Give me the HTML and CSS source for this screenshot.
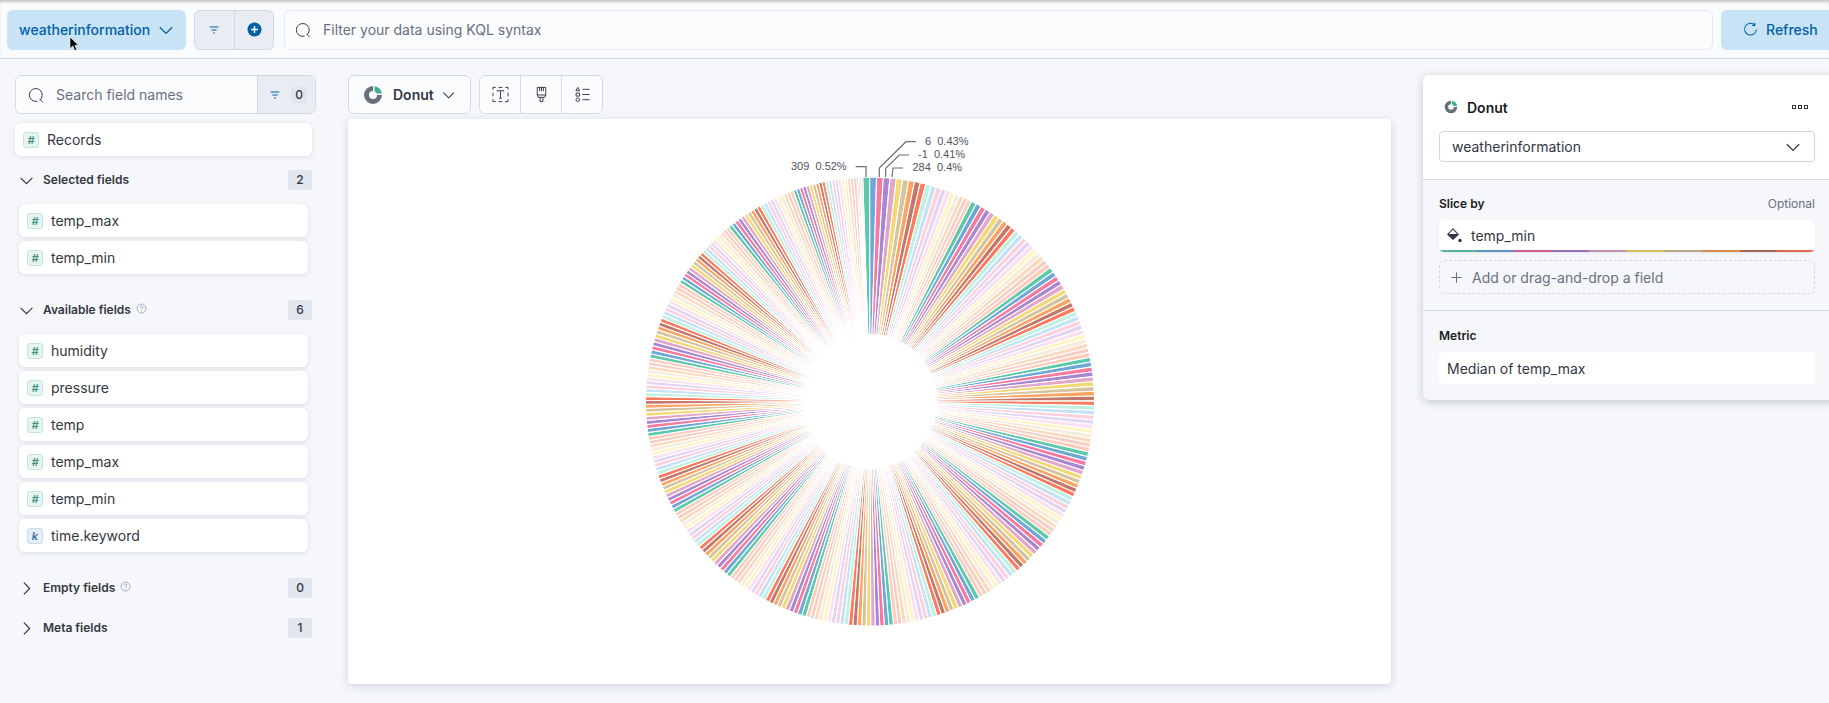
FILE: index.html
```html
<!DOCTYPE html>
<html lang="en">
<head>
    <meta charset="UTF-8">
    <meta name="viewport" content="width=device-width, initial-scale=1.0">
    <title>Lens - weatherinformation</title>
    <link rel="stylesheet" href="styles.css">
</head>
<body>

<div class="topbar">
    <button class="dataview-btn">
        <span>weatherinformation</span>
        <svg class="chevron" viewBox="0 0 16 16"><path d="M2.5 5.5 8 11l5.5-5.5"/></svg>
    </button>
    <div class="filter-group">
        <div class="filter-cell">
            <svg class="filter-icon" viewBox="0 0 16 16"><path d="M3 4.5h10M5 8h6M7 11.5h2"/></svg>
        </div>
        <div class="filter-cell">
            <svg class="plus-icon" viewBox="0 0 16 16"><circle cx="8" cy="8" r="7.5"/><path d="M8 4.2v7.6M4.2 8h7.6"/></svg>
        </div>
    </div>
    <div class="query-input">
        <svg class="search-icon" viewBox="0 0 16 16"><path d="M12.2 12.6a6.4 6.4 0 1 0-2.6 1.5M11.6 11.8l3 3.4"/></svg>
        <span>Filter your data using KQL syntax</span>
    </div>
    <button class="refresh-btn">
        <svg class="refresh-icon" viewBox="0 0 16 16"><path d="M12.5 3.2A6.3 6.3 0 1 0 14.3 8M12.6 .8v3h-3"/></svg>
        <span>Refresh</span>
    </button>
</div>

<div class="main">
    <div class="sidebar">
        <div class="field-search">
            <div class="field-search-input">
                <svg class="search-icon" viewBox="0 0 16 16"><path d="M12.2 12.6a6.4 6.4 0 1 0-2.6 1.5M11.6 11.8l3 3.4"/></svg>
                <span>Search field names</span>
            </div>
            <div class="field-search-filter">
                <svg class="filter-icon" viewBox="0 0 16 16"><path d="M3 4.5h10M5 8h6M7 11.5h2"/></svg>
                <span class="search-count">0</span>
            </div>
        </div>

        <div class="field-item records"><span class="type-icon">#</span>Records</div>

        <div class="section-head">
            <svg class="section-chevron" viewBox="0 0 16 16"><path d="M2.5 5.5 8 11l5.5-5.5"/></svg>
            <span class="section-title">Selected fields</span>
            <span class="count">2</span>
        </div>
        <div class="field-list">
            <div class="field-item"><span class="type-icon">#</span>temp_max</div>
            <div class="field-item"><span class="type-icon">#</span>temp_min</div>
        </div>

        <div class="section-head gap-top">
            <svg class="section-chevron" viewBox="0 0 16 16"><path d="M2.5 5.5 8 11l5.5-5.5"/></svg>
            <span class="section-title">Available fields</span>
            <svg class="help-icon" viewBox="0 0 16 16"><circle cx="8" cy="8" r="6.5"/><path d="M6 6.4a2 2 0 1 1 3 1.7c-.7.4-1 .8-1 1.6M8 11.2v.9"/></svg>
            <span class="count">6</span>
        </div>
        <div class="field-list">
            <div class="field-item"><span class="type-icon">#</span>humidity</div>
            <div class="field-item"><span class="type-icon">#</span>pressure</div>
            <div class="field-item"><span class="type-icon">#</span>temp</div>
            <div class="field-item"><span class="type-icon">#</span>temp_max</div>
            <div class="field-item"><span class="type-icon">#</span>temp_min</div>
            <div class="field-item"><span class="type-icon keyword">k</span>time.keyword</div>
        </div>

        <div class="section-head gap-top">
            <svg class="section-chevron" viewBox="0 0 16 16"><path d="M5.5 2.5 11 8l-5.5 5.5"/></svg>
            <span class="section-title">Empty fields</span>
            <svg class="help-icon" viewBox="0 0 16 16"><circle cx="8" cy="8" r="6.5"/><path d="M6 6.4a2 2 0 1 1 3 1.7c-.7.4-1 .8-1 1.6M8 11.2v.9"/></svg>
            <span class="count">0</span>
        </div>
        <div class="section-head next">
            <svg class="section-chevron" viewBox="0 0 16 16"><path d="M5.5 2.5 11 8l-5.5 5.5"/></svg>
            <span class="section-title">Meta fields</span>
            <span class="count">1</span>
        </div>
    </div>

    <div class="workspace">
        <div class="toolbar">
            <button class="chart-type">
                <svg class="donut-icon" viewBox="0 0 20 20"><path class="donut-rest" d="M10 1a9 9 0 1 0 9 9h-5a4 4 0 1 1-4-4z"/><path class="donut-part" d="M11.5 1.2a9 9 0 0 1 7.3 7.3h-5a4 4 0 0 0-2.3-2.3z"/></svg>
                <span>Donut</span>
                <svg class="chevron dark" viewBox="0 0 16 16"><path d="M2.5 5.5 8 11l5.5-5.5"/></svg>
            </button>
            <div class="tool-group">
                <div class="tool">
                    <svg viewBox="0 0 18 18"><path d="M1 4V1.5h3M7 1.5h4M14 1.5h3V4M17 7v4M17 14v2.5h-3M11 16.5H7M4 16.5H1V14M1 11V7"/><path d="M5.5 6V5h7v1M9 5v8M7.5 13h3"/></svg>
                </div>
                <div class="tool">
                    <svg viewBox="0 0 18 18"><path d="M4.5 1.5h9v8h-9zM7 1.5v4M9 1.5v4M11 1.5v4M4.5 9.5l1 2.5h7l1-2.5M7.5 12v4.5h3V12"/></svg>
                </div>
                <div class="tool">
                    <svg viewBox="0 0 18 18"><path d="M4 1.5 6 5H2zM2.2 7.5h3.6v3.2H2.2z"/><circle cx="4" cy="14.5" r="1.9"/><path d="M9 3.5h7.5M9 9h7.5M9 14.5h7.5"/></svg>
                </div>
            </div>
        </div>
        <div class="chart-panel">
            <svg class="chart" viewBox="0 0 1043 565">
                <g id="slices"></g>
                <polyline class="leader" points="507.7,47.7 518,47.7 518,58"/>
                <polyline class="leader" points="568,22.7 558,22.7 531.3,49 531.3,58"/>
                <polyline class="leader" points="561,36 551.3,36 537.7,49.3 537.7,58"/>
                <polyline class="leader" points="555,49 545,49 544,58"/>
                <text class="label" x="443" y="50.8">309  0.52%</text>
                <text class="label" x="577" y="25.5">6  0.43%</text>
                <text class="label" x="570" y="39">-1  0.41%</text>
                <text class="label" x="564.5" y="51.5">284  0.4%</text>
            </svg>
        </div>
    </div>

    <div class="config">
        <div class="config-top">
            <div class="config-title">
                <svg class="donut-icon small" viewBox="0 0 20 20"><path class="donut-rest" d="M10 1a9 9 0 1 0 9 9h-5a4 4 0 1 1-4-4z"/><path class="donut-part" d="M11.5 1.2a9 9 0 0 1 7.3 7.3h-5a4 4 0 0 0-2.3-2.3z"/></svg>
                <span class="config-name">Donut</span>
                <span class="dots"><i></i><i></i><i></i></span>
            </div>
            <div class="config-select">
                <span>weatherinformation</span>
                <svg class="chevron dark" viewBox="0 0 16 16"><path d="M2.5 5.5 8 11l5.5-5.5"/></svg>
            </div>
        </div>
        <div class="config-block">
            <div class="config-label"><b>Slice by</b><span>Optional</span></div>
            <div class="dimension">
                <svg class="bucket-icon" viewBox="0 0 16 16"><path d="M7 1 1 7.5 7 13l6-5.5z"/><path class="bucket-empty" d="M7 2.6 2.9 7h8.2z"/><path d="M5 1.5 7 3.5"/><circle cx="14" cy="13.5" r="1.7"/></svg>
                <span>temp_min</span>
                <div class="palette">
                    <i class="c1"></i><i class="c2"></i><i class="c3"></i><i class="c4"></i><i class="c5"></i>
                    <i class="c6"></i><i class="c7"></i><i class="c8"></i><i class="c9"></i><i class="c10"></i>
                </div>
            </div>
            <div class="add-field">
                <svg class="add-icon" viewBox="0 0 16 16"><path d="M8 2.5v11M2.5 8h11"/></svg>
                <span>Add or drag-and-drop a field</span>
            </div>
        </div>
        <div class="config-block metric">
            <div class="config-label"><b>Metric</b></div>
            <div class="metric-box">Median of temp_max</div>
        </div>
    </div>
</div>

<svg class="cursor" viewBox="0 0 10 16"><path d="M1 1v11.5l2.8-2.6 2 4.6 2-.9-2-4.4H9.4z"/></svg>

<script src="app.js"></script>
</body>
</html>
```

FILE: styles.css
```css
* {
    box-sizing: border-box;
}
body {
    margin: 0;
    height: 703px;
    overflow: hidden;
    font-family: Inter, "Noto Sans", sans-serif;
    font-size: 14px;
    color: #343741;
    background-color: #f5f7fb;
}
button {
    font-family: inherit;
    border: none;
    cursor: pointer;
}
svg path, svg polyline {
    fill: none;
}

/* top bar */
.topbar {
    display: flex;
    align-items: center;
    gap: 8px;
    height: 59px;
    padding: 1px 0 0 7px;
    background-color: #fafbfd;
    border-bottom: 1px solid #d3dae6;
    box-shadow: inset 0 3px 3px -1px rgba(0,0,0,0.22);
}
.dataview-btn {
    display: flex;
    align-items: center;
    justify-content: space-between;
    flex: none;
    width: 179px;
    height: 40px;
    padding: 0 11px 0 12px;
    font-size: 14px;
    font-weight: 500;
    color: #0061a6;
    background-color: #c8e3f5;
    border-radius: 6px;
}
.chevron {
    width: 18px;
    height: 18px;
}
.chevron path {
    stroke: #0061a6;
    stroke-width: 1.1;
}
.chevron.dark path {
    stroke: #343741;
}
.filter-group {
    display: flex;
    flex: none;
    width: 80px;
    height: 40px;
    background-color: #e9edf3;
    border: 1px solid #d3dae6;
    border-radius: 6px;
}
.filter-cell {
    display: flex;
    align-items: center;
    justify-content: center;
    flex: 1;
}
.filter-cell + .filter-cell {
    border-left: 1px solid #d3dae6;
}
.filter-icon {
    width: 14px;
    height: 14px;
}
.filter-icon path {
    stroke: #0061a6;
    stroke-width: 1.2;
}
.plus-icon {
    width: 15px;
    height: 15px;
    margin-left: 1px;
}
.plus-icon circle {
    fill: #0061a6;
}
.plus-icon path {
    stroke: #fff;
    stroke-width: 1.6;
}
.query-input {
    display: flex;
    align-items: center;
    flex: 1;
    height: 40px;
    margin-left: 2px;
    padding-left: 10px;
    color: #69707d;
    background-color: #fbfcfd;
    border: 1px solid #e3e8f2;
    border-radius: 6px;
}
.search-icon {
    width: 16px;
    height: 16px;
    margin-right: 12px;
    flex: none;
}
.search-icon path {
    stroke: #343741;
    stroke-width: 1;
}
.refresh-btn {
    display: flex;
    align-items: center;
    flex: none;
    width: 130px;
    height: 40px;
    margin-right: -22px;
    padding-left: 22px;
    font-size: 14px;
    font-weight: 500;
    color: #0061a6;
    background-color: #c8e3f5;
    border-radius: 6px;
}
.refresh-icon {
    width: 15px;
    height: 15px;
    margin-right: 8px;
}
.refresh-icon path {
    stroke: #0061a6;
    stroke-width: 1.1;
}

.main {
    display: flex;
    height: 644px;
}

/* field list */
.sidebar {
    flex: none;
    width: 348px;
    padding: 16px 36px 0 15px;
}
.field-search {
    display: flex;
    height: 39px;
    margin-right: -4px;
    background-color: #fbfcfd;
    border: 1px solid #d3dae6;
    border-radius: 6px;
    overflow: hidden;
}
.field-search-input {
    display: flex;
    align-items: center;
    flex: 1;
    padding-left: 12px;
    color: #69707d;
}
.field-search-input .search-icon {
    margin-right: 12px;
}
.field-search-filter {
    display: flex;
    align-items: center;
    width: 58px;
    padding-left: 10px;
    background-color: #e9edf3;
    border-left: 1px solid #d3dae6;
}
.search-count {
    width: 16px;
    height: 16px;
    margin-left: 9px;
    font-size: 12px;
    font-weight: 500;
    line-height: 16px;
    text-align: center;
    background-color: #e0e5ee;
    border-radius: 3px;
}
.field-item {
    display: flex;
    align-items: center;
    height: 33px;
    padding-left: 8px;
    color: #343741;
    background-color: #fff;
    border-radius: 6px;
    box-shadow: 0 1px 4px rgba(152,162,179,0.3);
}
.records {
    margin-top: 9px;
}
.type-icon {
    flex: none;
    width: 16px;
    height: 16px;
    margin-right: 8px;
    font-size: 11px;
    font-weight: 600;
    font-style: italic;
    line-height: 14px;
    text-align: center;
    color: #3f917b;
    background-color: #e6f5ef;
    border: 1px solid #c3e6da;
    border-radius: 3px;
}
.type-icon.keyword {
    color: #3b6f9e;
    background-color: #e7f0f8;
    border-color: #c9dcec;
}
.section-head {
    display: flex;
    align-items: center;
    height: 20px;
    margin-top: 14px;
    padding-left: 3px;
}
.section-head.gap-top {
    margin-top: 26px;
}
.section-head.next {
    margin-top: 20px;
}
.section-chevron {
    flex: none;
    width: 17px;
    height: 17px;
    margin-right: 8px;
}
.section-chevron path {
    stroke: #343741;
    stroke-width: 1.1;
}
.section-title {
    padding-bottom: 2px;
    font-size: 12px;
    font-weight: 600;
}
.help-icon {
    width: 11px;
    height: 11px;
    margin: -3px 0 0 5px;
}
.help-icon circle, .help-icon path {
    fill: none;
    stroke: #98a2b3;
    stroke-width: 1.2;
}
.count {
    width: 24px;
    height: 20px;
    margin-left: auto;
    font-size: 12px;
    font-weight: 500;
    line-height: 20px;
    text-align: center;
    background-color: #e0e5ee;
    border-radius: 3px;
}
.field-list {
    display: flex;
    flex-direction: column;
    gap: 4px;
    margin-top: 14px;
    padding: 0 4px;
}

/* chart */
.workspace {
    flex: none;
    width: 1043px;
    padding-top: 16px;
}
.toolbar {
    display: flex;
    gap: 8px;
    height: 39px;
}
.chart-type {
    display: flex;
    align-items: center;
    width: 123px;
    height: 39px;
    padding: 0 14px;
    font-size: 14px;
    font-weight: 600;
    color: #343741;
    background-color: #fbfcfd;
    border: 1px solid #d3dae6;
    border-radius: 6px;
}
.chart-type .chevron {
    margin-left: 7px;
}
.donut-icon {
    flex: none;
    width: 20px;
    height: 20px;
    margin-right: 10px;
}
.donut-icon .donut-rest {
    fill: #69707d;
}
.donut-icon .donut-part {
    fill: #3eb08f;
}
.donut-icon.small {
    width: 14px;
    height: 14px;
    margin: 0 9px 0 5px;
}
.tool-group {
    display: flex;
    width: 124px;
    height: 39px;
    background-color: #fbfcfd;
    border: 1px solid #d3dae6;
    border-radius: 6px;
}
.tool {
    display: flex;
    align-items: center;
    justify-content: center;
    flex: 1;
}
.tool + .tool {
    border-left: 1px solid #d3dae6;
}
.tool svg {
    width: 17px;
    height: 17px;
}
.tool svg path, .tool svg circle {
    fill: none;
    stroke: #343741;
    stroke-width: 1;
}
.chart-panel {
    height: 565px;
    margin-top: 5px;
    background-color: #fff;
    border-radius: 4px;
    box-shadow: 0 2px 8px rgba(152,162,179,0.4);
}
.chart {
    display: block;
    width: 1043px;
    height: 565px;
}
#slices path {
    stroke: #fff;
    stroke-width: 1.1;
}
.leader {
    stroke: #6a6f78;
    stroke-width: 1.2;
}
.label {
    font-family: "Liberation Sans", Arial, sans-serif;
    font-size: 11px;
    white-space: pre;
    fill: #4f545e;
}

/* layer settings */
.config {
    flex: none;
    align-self: flex-start;
    width: 420px;
    margin: 16px 0 0 32px;
    padding-right: 14px;
    background-color: #f5f7fb;
    border-radius: 6px 0 0 6px;
    box-shadow: 0 2px 10px rgba(120,130,150,0.4);
}
.config-top {
    height: 105px;
    margin-right: -14px;
    padding: 0 28px 0 16px;
    background-color: #fff;
    border-bottom: 1px solid #d3dae6;
    border-radius: 6px 0 0 0;
}
.config-title {
    display: flex;
    align-items: center;
    height: 56px;
    padding-top: 8px;
}
.config-name {
    font-weight: 600;
    color: #1a1c21;
}
.dots {
    display: flex;
    gap: 2px;
    margin: 0 7px 0 auto;
}
.dots i {
    width: 4px;
    height: 4px;
    border: 1px solid #343741;
}
.config-select {
    display: flex;
    align-items: center;
    justify-content: space-between;
    width: 376px;
    height: 31px;
    padding: 0 12px 0 12px;
    border: 1px solid #ccd5e2;
    border-radius: 4px;
}
.config-block {
    margin-left: 16px;
    padding-top: 16px;
}
.config-label {
    display: flex;
    justify-content: space-between;
    width: 376px;
    height: 15px;
    font-size: 12px;
    line-height: 15px;
    color: #69707d;
}
.config-label b {
    font-weight: 600;
    color: #1a1c21;
}
.dimension {
    position: relative;
    display: flex;
    align-items: center;
    width: 376px;
    height: 32px;
    margin-top: 9px;
    padding: 0 0 2px 7px;
    background-color: #fff;
    border-radius: 5px;
    overflow: hidden;
    box-shadow: 0 1px 2px rgba(152,162,179,0.2);
}
.bucket-icon {
    width: 16px;
    height: 16px;
    margin-right: 9px;
}
.bucket-icon path, .bucket-icon circle {
    fill: #343741;
}
.bucket-icon .bucket-empty {
    fill: #fff;
}
.palette {
    position: absolute;
    left: 0;
    right: 0;
    bottom: 0;
    display: flex;
    height: 2px;
}
.palette i {
    flex: 1;
}
.c1 { background-color: #54b399; }
.c2 { background-color: #6092c0; }
.c3 { background-color: #d36086; }
.c4 { background-color: #9170b8; }
.c5 { background-color: #ca8eae; }
.c6 { background-color: #d6bf57; }
.c7 { background-color: #b9a888; }
.c8 { background-color: #da8b45; }
.c9 { background-color: #aa6556; }
.c10 { background-color: #e7664c; }
.add-field {
    display: flex;
    align-items: center;
    width: 376px;
    height: 34px;
    margin-top: 8px;
    padding-left: 9px;
    color: #69707d;
    border: 1px dashed #d3dae6;
    border-radius: 5px;
}
.add-icon {
    width: 15px;
    height: 15px;
    margin-right: 8px;
}
.add-icon path {
    stroke: #69707d;
    stroke-width: 1.1;
}
.config-block.metric {
    margin-top: 16px;
    margin-left: 0;
    padding: 17px 0 16px 16px;
    border-top: 1px solid #d3dae6;
    margin-right: -14px;
}
.metric-box {
    display: flex;
    align-items: center;
    width: 376px;
    height: 32px;
    margin-top: 9px;
    padding-left: 8px;
    background-color: #fff;
    border-radius: 5px;
}

/* mouse pointer from the capture */
.cursor {
    position: absolute;
    left: 69px;
    top: 36px;
    width: 10px;
    height: 16px;
}
.cursor path {
    fill: #000;
    stroke: #fff;
    stroke-width: 0.6;
}
```

FILE: app.js
```js
// draws the donut, 20 slices for each turn of the palette
var cx = 522, cy = 282.5, outer = 224.5, inner = 67;

var colors = [
    "#5cc8ac", "#6fa8d6", "#f67a9f", "#a887d0", "#e4a6c8",
    "#f3d873", "#d6c4a0", "#fba363", "#c2786a", "#fd7a5f",
    "#c0f0e2", "#c4e2f6", "#ffcfdc", "#e4d4f4", "#fbe0f0",
    "#fff4c4", "#f6ecdc", "#fdd9bc", "#f5cec4", "#ffccbc"
];

// angle where each green slice starts, clockwise from the top
var starts = [-1.87, 26.9, 53.4, 78.6, 103, 126.9, 150.8, 174, 196.6, 218.6,
    240.3, 261, 281.2, 302, 321, 340, 356.6, 358.13];

function point(r, deg) {
    var a = (deg - 90) * Math.PI / 180;
    return (cx + r * Math.cos(a)).toFixed(2) + " " + (cy + r * Math.sin(a)).toFixed(2);
}

function slicePath(a, b) {
    return "M" + point(outer, a) +
        "A" + outer + " " + outer + " 0 0 1 " + point(outer, b) +
        "L" + point(inner, b) +
        "A" + inner + " " + inner + " 0 0 0 " + point(inner, a) + "Z";
}

var group = document.getElementById("slices");
var ns = "http://www.w3.org/2000/svg";

for (var c = 0; c < starts.length - 1; c++) {
    var span = starts[c + 1] - starts[c];
    var count = c === starts.length - 2 ? 4 : 20;
    // the values are sorted, the first turn of the palette thins out the most
    var taper = c === 0 ? 0.25 : 0.04;
    var angle = starts[c];
    for (var i = 0; i < count; i++) {
        var width = span / count * (1 + taper - 2 * taper * i / (count - 1));
        var path = document.createElementNS(ns, "path");
        path.setAttribute("d", slicePath(angle, angle + width));
        path.setAttribute("style", "fill:" + colors[c === starts.length - 2 ? i * 2 : i]);
        group.appendChild(path);
        angle += width;
    }
}
```
